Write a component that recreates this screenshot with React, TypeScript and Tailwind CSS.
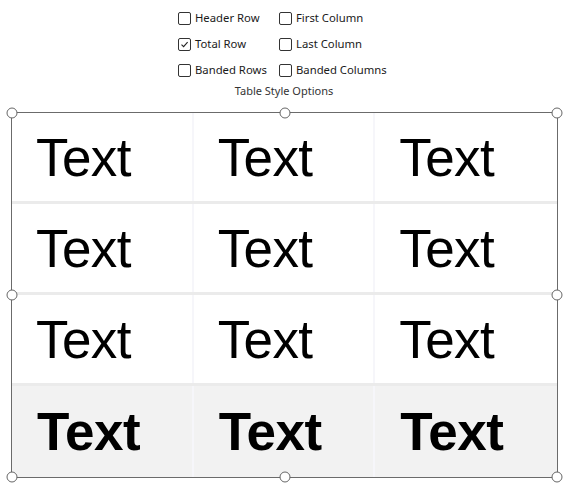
import React from "react";

function Box({ checked }: { checked?: boolean }) {
  return (
    <span className="w-[13px] h-[13px] border border-[#333] rounded-[2px] bg-white flex items-center justify-center shrink-0">
      {checked && (
        <svg width="9" height="9" viewBox="0 0 9 9">
          <path d="M1.5 4.6 L3.6 6.6 L7.6 2.2" fill="none" stroke="#222" strokeWidth="1.1" />
        </svg>
      )}
    </span>
  );
}

function Opt({ label, checked }: { label: string; checked?: boolean }) {
  return (
    <div className="flex items-center gap-[4px] h-[26px] whitespace-nowrap">
      <Box checked={checked} />
      <span className="text-[11.3px] text-[#1a1a1a]">{label}</span>
    </div>
  );
}

function Handle({ cls }: { cls: string }) {
  return (
    <span
      className={`absolute w-[11px] h-[11px] rounded-full border-[1.5px] border-[#666] bg-white -translate-x-1/2 -translate-y-1/2 ${cls}`}
    />
  );
}

export default function App() {
  const rows = [0, 1, 2, 3];
  const cols = [0, 1, 2];
  return (
    <div
      className="w-[566px] h-[491px] bg-white relative overflow-hidden"
      style={{ fontFamily: '"Noto Sans", sans-serif' }}
    >
      <div className="absolute left-[178px] top-[5px]">
        <div className="grid grid-cols-[101px_120px]">
          <Opt label="Header Row" />
          <Opt label="First Column" />
          <Opt label="Total Row" checked />
          <Opt label="Last Column" />
          <Opt label="Banded Rows" />
          <Opt label="Banded Columns" />
        </div>
      </div>
      <div className="absolute left-0 top-[84px] w-[566px] flex justify-center">
        <div className="text-[11px] text-[#333] leading-[14px] ml-[2px]">Table Style Options</div>
      </div>
      <div className="absolute left-[11px] top-[112px] w-[547px] h-[366px] border border-[#6b6b6b]">
        <div
          className="grid grid-rows-4 h-full"
          style={{ fontFamily: '"Liberation Sans", Arial, sans-serif' }}
        >
          {rows.map((r) => (
            <div
              key={r}
              className={`grid grid-cols-3 ${r < 3 ? "border-b-[3px] border-[#ebebeb]" : ""} ${r === 3 ? "bg-[#f2f2f2]" : ""}`}
            >
              {cols.map((c) => (
                <div
                  key={c}
                  className={`flex items-center pl-[24px] ${c < 2 ? "border-r-[2px] border-[#f6f6fa]" : ""}`}
                >
                  <span
                    className={`text-[53px] leading-none text-black ${r === 3 ? "font-bold tracking-[-0.5px] pl-[1px]" : "tracking-[-0.6px]"}`}
                  >
                    Text
                  </span>
                </div>
              ))}
            </div>
          ))}
        </div>
        <Handle cls="left-0 top-0" />
        <Handle cls="left-1/2 top-0" />
        <Handle cls="left-full top-0" />
        <Handle cls="left-0 top-1/2" />
        <Handle cls="left-full top-1/2" />
        <Handle cls="left-0 top-full" />
        <Handle cls="left-1/2 top-full" />
        <Handle cls="left-full top-full" />
      </div>
    </div>
  );
}
